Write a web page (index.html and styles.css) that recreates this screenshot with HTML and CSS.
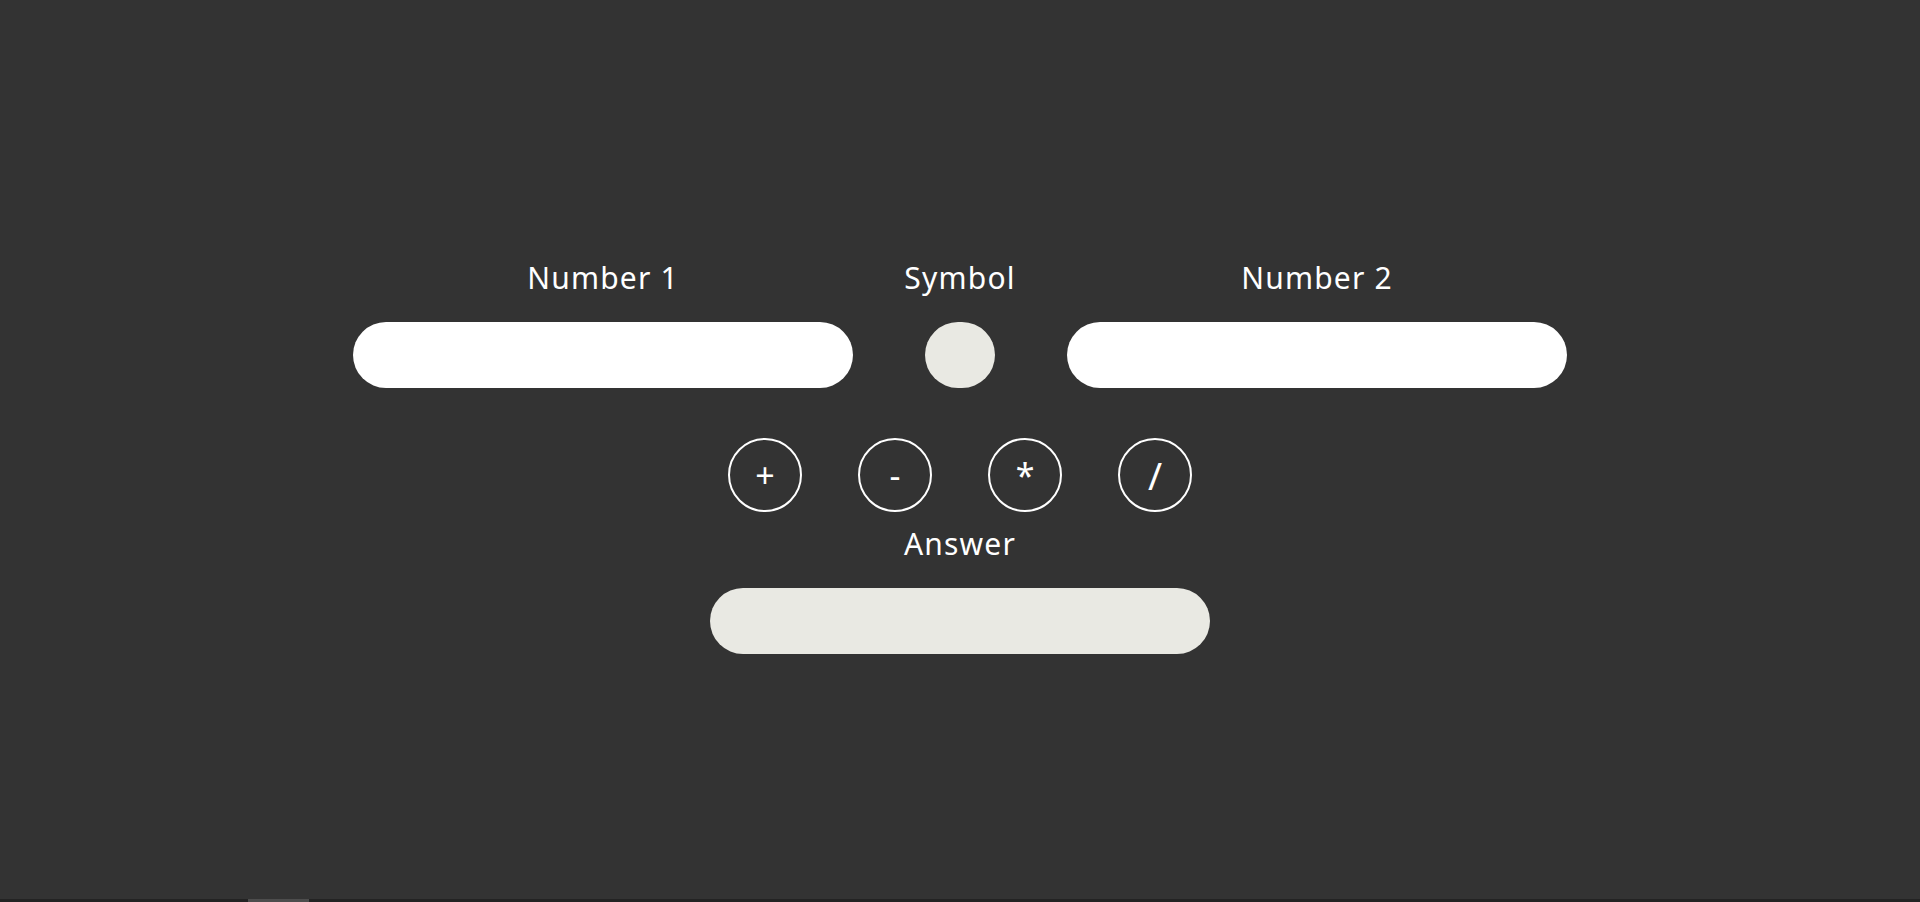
FILE: index.html
```html
<!DOCTYPE html>
<html lang="en">
<head>
<meta charset="utf-8">
<title>Calculator</title>
<link rel="stylesheet" href="styles.css">
</head>
<body>
<main class="calc">
  <div class="fields">
    <label class="label">Number 1</label>
    <label class="label">Symbol</label>
    <label class="label">Number 2</label>
    <input class="field field-num" type="text">
    <input class="field field-sym" type="text">
    <input class="field field-num" type="text">
  </div>
  <div class="ops">
    <button class="op">+</button>
    <button class="op">-</button>
    <button class="op op-star">*</button>
    <button class="op op-slash">/</button>
  </div>
  <label class="label answer-label">Answer</label>
  <input class="field field-answer" type="text">
</main>
<div class="hscroll"><div class="hscroll-thumb"></div></div>
</body>
</html>
```

FILE: styles.css
```css
html, body {
  margin: 0;
  padding: 0;
  height: 100%;
}
body {
  background: #333333;
  font-family: "Noto Sans", "Open Sans", sans-serif;
  color: #ffffff;
  overflow: hidden;
}
.calc {
  display: flex;
  flex-direction: column;
  align-items: center;
  padding-top: 260px;
}
.fields {
  display: grid;
  grid-template-columns: 500px 70px 500px;
  column-gap: 72px;
  row-gap: 26px;
  justify-items: center;
}
.label {
  font-size: 30px;
  line-height: 36px;
  height: 36px;
  letter-spacing: 1.2px;
  color: #ffffff;
  white-space: nowrap;
}
.field {
  border: none;
  outline: none;
  height: 66px;
  border-radius: 33px;
  padding: 0 24px;
  box-sizing: border-box;
  font-family: inherit;
  font-size: 24px;
}
.field-num {
  width: 500px;
  background: #ffffff;
}
.field-sym {
  width: 70px;
  background: #e9e9e3;
}
.ops {
  display: flex;
  gap: 56px;
  margin-top: 50px;
}
.op {
  width: 74px;
  height: 74px;
  border-radius: 50%;
  border: 2px solid #ffffff;
  background: transparent;
  color: #ffffff;
  font-family: inherit;
  font-size: 34px;
  line-height: 1;
  padding: 0;
  display: flex;
  align-items: center;
  justify-content: center;
}
.op-slash {
  font-size: 38px;
}
.answer-label {
  margin-top: 14px;
}
.field-answer {
  margin-top: 26px;
  width: 500px;
  background: #e9e9e3;
}
.hscroll {
  position: fixed;
  left: 0;
  right: 0;
  bottom: 0;
  height: 3px;
  background: #232323;
}
.hscroll-thumb {
  position: absolute;
  left: 248px;
  width: 61px;
  top: 0;
  bottom: 0;
  background: #4d4d4d;
}
```
